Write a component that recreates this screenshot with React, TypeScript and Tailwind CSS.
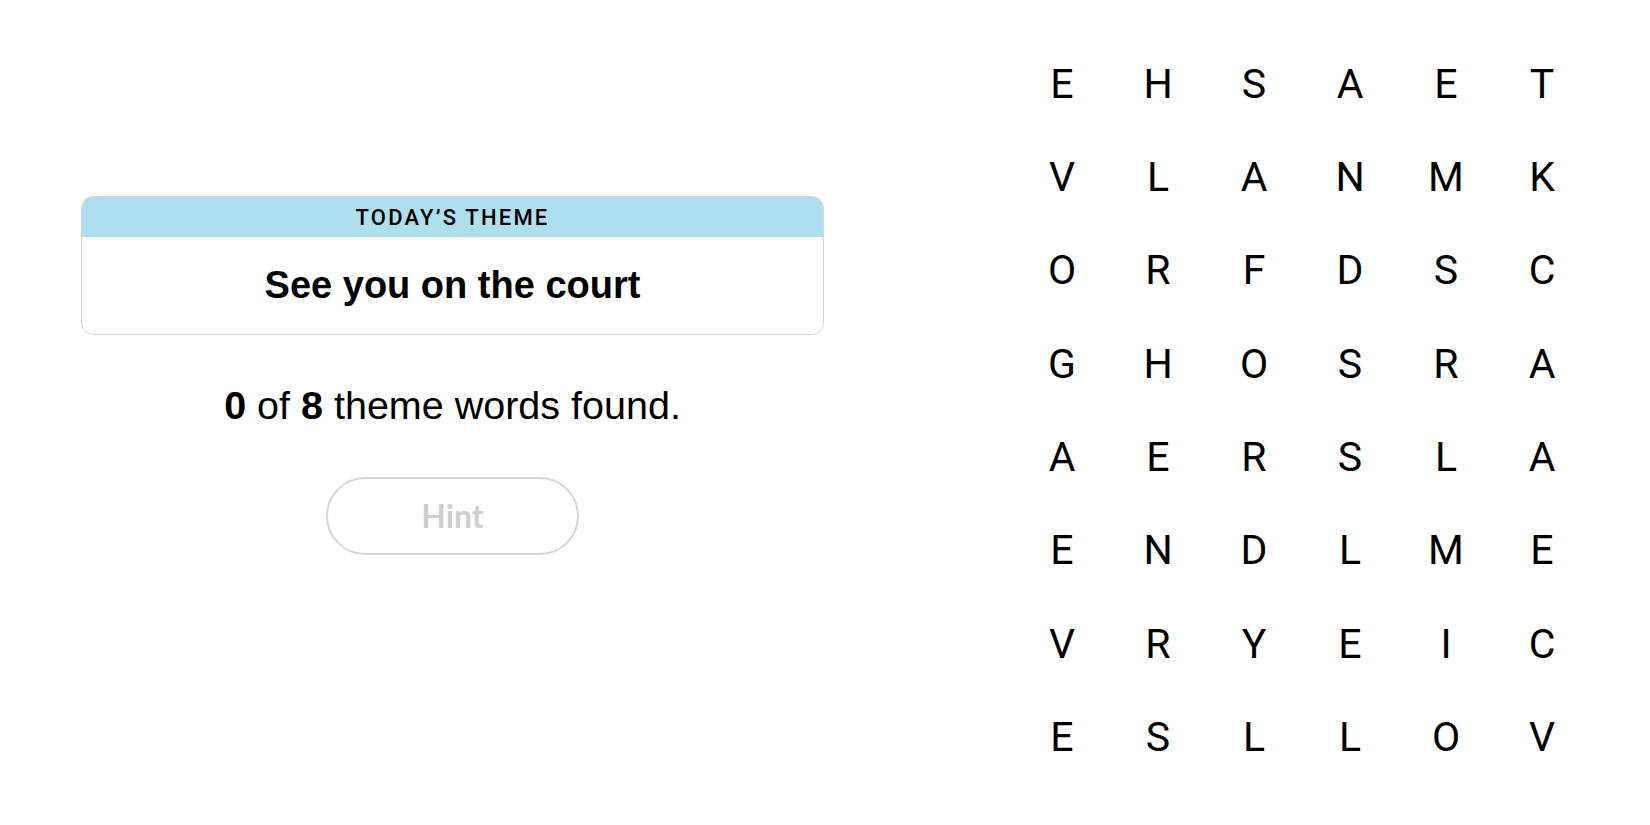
const GRID = [
  ['E', 'H', 'S', 'A', 'E', 'T'],
  ['V', 'L', 'A', 'N', 'M', 'K'],
  ['O', 'R', 'F', 'D', 'S', 'C'],
  ['G', 'H', 'O', 'S', 'R', 'A'],
  ['A', 'E', 'R', 'S', 'L', 'A'],
  ['E', 'N', 'D', 'L', 'M', 'E'],
  ['V', 'R', 'Y', 'E', 'I', 'C'],
  ['E', 'S', 'L', 'L', 'O', 'V'],
];

export default function App() {
  return (
    <div className="flex justify-between w-full h-[825px] pl-[81px] pr-[60px] bg-white text-black font-['Liberation_Sans',Arial,sans-serif]">
      {/* Theme panel */}
      <div className="w-[743px] pt-[196px] flex flex-col items-center">
        <div className="w-full rounded-[12px] border border-[#d6d6d6] overflow-hidden">
          <div className="h-[40px] bg-[#aedfee] flex items-center justify-center text-[22px] tracking-[0.1em] font-medium font-['Roboto',sans-serif]">
            TODAY’S THEME
          </div>
          <div className="h-[97px] flex items-center justify-center text-[38px] font-bold">
            See you on the court
          </div>
        </div>

        <p className="mt-[48px] text-[39.5px] leading-[44px]">
          <span className="font-bold">0</span> of <span className="font-bold">8</span> theme words found.
        </p>

        <button className="mt-[50px] w-[253px] h-[78px] rounded-full border-2 border-[#d6d6d6] text-[32px] font-bold text-[#cfcfcf] font-['Lato',sans-serif]">
          Hint
        </button>
      </div>

      {/* Letter board */}
      <div className="mt-[38px] grid grid-cols-6 w-[576px] h-fit font-['Roboto',sans-serif]">
        {GRID.flat().map((ch, i) => (
          <div key={i} className="h-[93.3px] flex items-center justify-center text-[41px]">
            {ch}
          </div>
        ))}
      </div>
    </div>
  );
}
